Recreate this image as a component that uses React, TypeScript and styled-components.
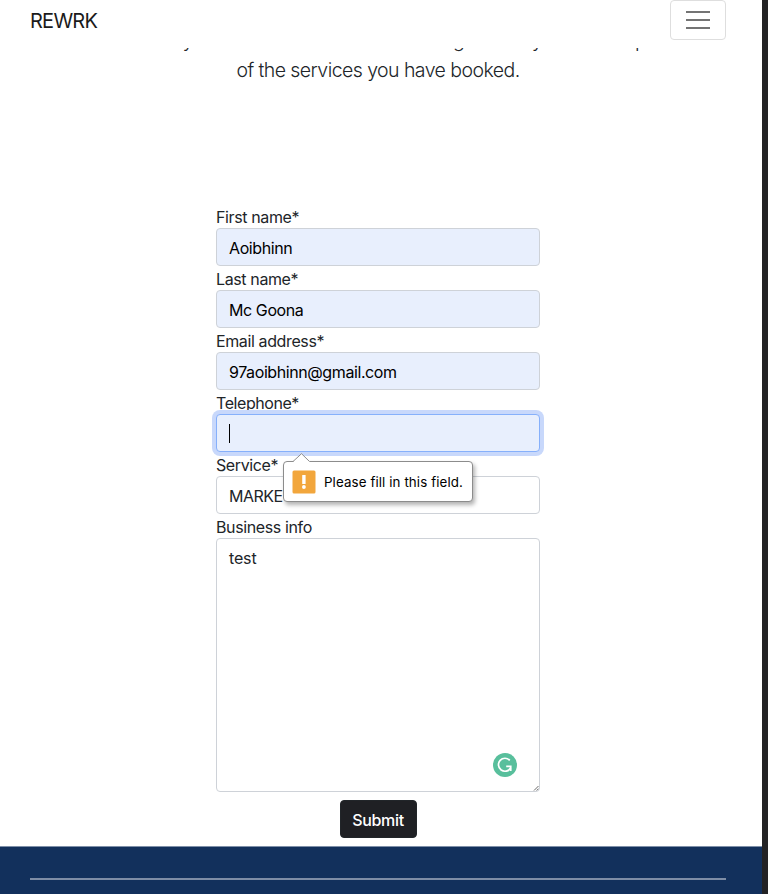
import React from 'react';
import styled, { createGlobalStyle } from 'styled-components';

const GlobalStyle = createGlobalStyle`
  *, *::before, *::after { box-sizing: border-box; }
  body {
    margin: 0;
    background: #fff;
    color: #212529;
    font: 400 16px/24px Inter, "Liberation Sans", sans-serif;
    overflow: hidden;
  }
`;

const Window = styled.div`
  display: flex;
  height: 894px;
  background: #232325;
  overflow: hidden;
`;

const Page = styled.div`
  width: 762px;
  height: 894px;
  display: flex;
  flex-direction: column;
  background: #fff;
  overflow: hidden;
`;

const Navbar = styled.header`
  height: 48px;
  flex: none;
  display: flex;
  align-items: flex-start;
  justify-content: space-between;
  padding: 0 36px 0 30px;
`;

const Text = styled.span<{ $track?: number }>`
  display: inline-block;
  white-space: pre;
  letter-spacing: ${(p) => p.$track ?? 0}px;
`;

const Brand = styled.a`
  font-size: 20px;
  line-height: 30px;
  padding-top: 6px;
  color: #1b1b1b;
`;

const Toggler = styled.button`
  width: 56px;
  height: 40px;
  padding: 0;
  border: 1px solid #dedede;
  border-radius: 4px;
  background: #fff;
  display: grid;
  place-items: center;
`;

const Intro = styled.section`
  height: 156px;
  flex: none;
  overflow: hidden;
  font-size: 19.5px;
  font-weight: 300;
  line-height: 30px;
`;

const IntroText = styled.p`
  margin: -23px 0 0;
  padding-right: 6px;
  text-align: center;
`;

const PassingLine = styled.span`
  display: flex;
  padding-left: 121px;
  height: 30px;
`;

const Phrase = styled.span<{ $w: number }>`
  width: ${(p) => p.$w}px;
  flex: none;
  text-align: left;
  white-space: nowrap;
`;

const Form = styled.form`
  width: 324px;
  flex: none;
  margin-left: 216px;
  display: flex;
  flex-direction: column;
`;

const Field = styled.div`
  position: relative;
  display: flex;
  flex-direction: column;
`;

const Label = styled.label`
  height: 24px;
  line-height: 26px;
`;

const Control = styled.div<{ $filled?: boolean; $focus?: boolean; $tall?: boolean }>`
  height: ${(p) => (p.$tall ? 254 : 38)}px;
  padding: 7px 12px;
  border: 1px solid ${(p) => (p.$focus ? '#86b0fb' : '#ced2d8')};
  border-radius: 4px;
  background: ${(p) => (p.$filled ? '#e8effd' : '#fff')};
  color: ${(p) => (p.$filled ? '#000' : '#212529')};
  box-shadow: ${(p) => (p.$focus ? '0 0 0 4px #c8d8fb' : 'none')};
  position: relative;
`;

const Caret = styled.span`
  display: block;
  width: 1px;
  height: 19px;
  margin-top: 2px;
  background: #000;
`;

const Grammar = styled.svg`
  position: absolute;
  right: 22px;
  bottom: 14px;
`;

const Grip = styled.svg`
  position: absolute;
  right: 0;
  bottom: 0;
`;

const Tooltip = styled.div`
  position: absolute;
  z-index: 2;
  left: 67px;
  top: 71px;
  width: 190px;
  height: 41px;
  padding-left: 8px;
  display: flex;
  align-items: center;
  gap: 8px;
  border: 1px solid #8c8c8c;
  border-radius: 4px;
  background: #fff;
  box-shadow: 2px 3px 4px rgba(0, 0, 0, 0.3);
  color: #000;
  font-size: 13.33px;
`;

const Pointer = styled.svg`
  position: absolute;
  left: 9px;
  top: -9px;
`;

const Submit = styled.button`
  align-self: center;
  width: 77px;
  height: 38px;
  margin: 8px 0;
  padding: 1px 0 0;
  border: 1px solid #212529;
  border-radius: 4px;
  background: #1f2024;
  color: #fff;
  font: 500 16px/24px Inter, sans-serif;
`;

const Footer = styled.footer`
  flex: 1;
  background: #12305c;
  border-top: 1px solid #7e8fa8;
  padding: 31px 36px 0 30px;
`;

const Divider = styled.div`
  height: 2px;
  background: #7e8da6;
`;

const filledFields = [
  { label: 'First name*', value: 'Aoibhinn' },
  { label: 'Last name*', value: 'Mc Goona' },
  { label: 'Email address*', value: '97aoibhinn@gmail.com' },
];

export default function App() {
  return (
    <>
      <GlobalStyle />
      <Window>
        <Page>
          <Navbar>
            <Brand><Text $track={-0.75}>REWRK</Text></Brand>
            <Toggler aria-label="Menu">
              <svg width="24" height="20" viewBox="0 0 24 20" fill="#747474">
                <path d="M0 1h24v2H0zM0 9h24v2H0zM0 17h24v2H0z" />
              </svg>
            </Toggler>
          </Navbar>
          <Intro>
            <IntroText>
              <PassingLine>
                <Phrase $w={332}>Thank you for the call</Phrase>
                <Phrase $w={79}>get</Phrase>
                <Phrase $w={103}>your</Phrase>
                <Phrase $w={60}>pack</Phrase>
              </PassingLine>
              <Text $track={-0.56}>of the services you have booked.</Text>
            </IntroText>
          </Intro>
          <Form>
            {filledFields.map((f) => (
              <Field key={f.label}>
                <Label><Text $track={-0.38}>{f.label}</Text></Label>
                <Control $filled><Text $track={-0.41}>{f.value}</Text></Control>
              </Field>
            ))}
            <Field>
              <Label><Text $track={-0.43}>Telephone*</Text></Label>
              <Control $filled $focus><Caret /></Control>
              <Tooltip role="alert">
                <Pointer width="18" height="10" viewBox="0 0 18 10">
                  <path d="M0 10V9L8.5 .7 17 9v1z" fill="#fff" />
                  <path d="M0 8.5 8.5.7l8 7.8" fill="none" stroke="#8c8c8c" />
                </Pointer>
                <svg width="24" height="24" viewBox="0 0 24 24">
                  <rect x=".5" y=".5" width="23" height="23" rx="1.5" fill="#f2a63c" />
                  <rect x="10.2" y="5" width="3.4" height="9" rx=".5" fill="#fff" />
                  <circle cx="11.9" cy="17" r="1.9" fill="#fff" />
                </svg>
                <Text $track={0.1}>Please fill in this field.</Text>
              </Tooltip>
            </Field>
            <Field>
              <Label><Text $track={-0.4}>Service*</Text></Label>
              <Control><Text $track={-0.5}>MARKETING</Text></Control>
            </Field>
            <Field>
              <Label><Text $track={-0.38}>Business info</Text></Label>
              <Control $tall>
                <Text $track={-0.15}>test</Text>
                <Grammar width="24" height="24" viewBox="0 0 24 24" fill="none" stroke="#fff">
                  <circle cx="12" cy="12" r="12" fill="#58bf9c" stroke="none" />
                  <path d="M16.8 7.4A6.5 6.5 0 1 0 17.6 15" strokeWidth="1.7" />
                  <path d="M13.2 13.4h4.5v4.6" strokeWidth="1.8" />
                </Grammar>
                <Grip width="6" height="6" viewBox="0 0 6 6" stroke="#444" strokeWidth=".8">
                  <path d="M1 5.5 5.5 1M3.7 5.5l1.8-1.8" />
                </Grip>
              </Control>
            </Field>
            <Submit type="button"><Text $track={-0.3}>Submit</Text></Submit>
          </Form>
          <Footer><Divider /></Footer>
        </Page>
      </Window>
    </>
  );
}
